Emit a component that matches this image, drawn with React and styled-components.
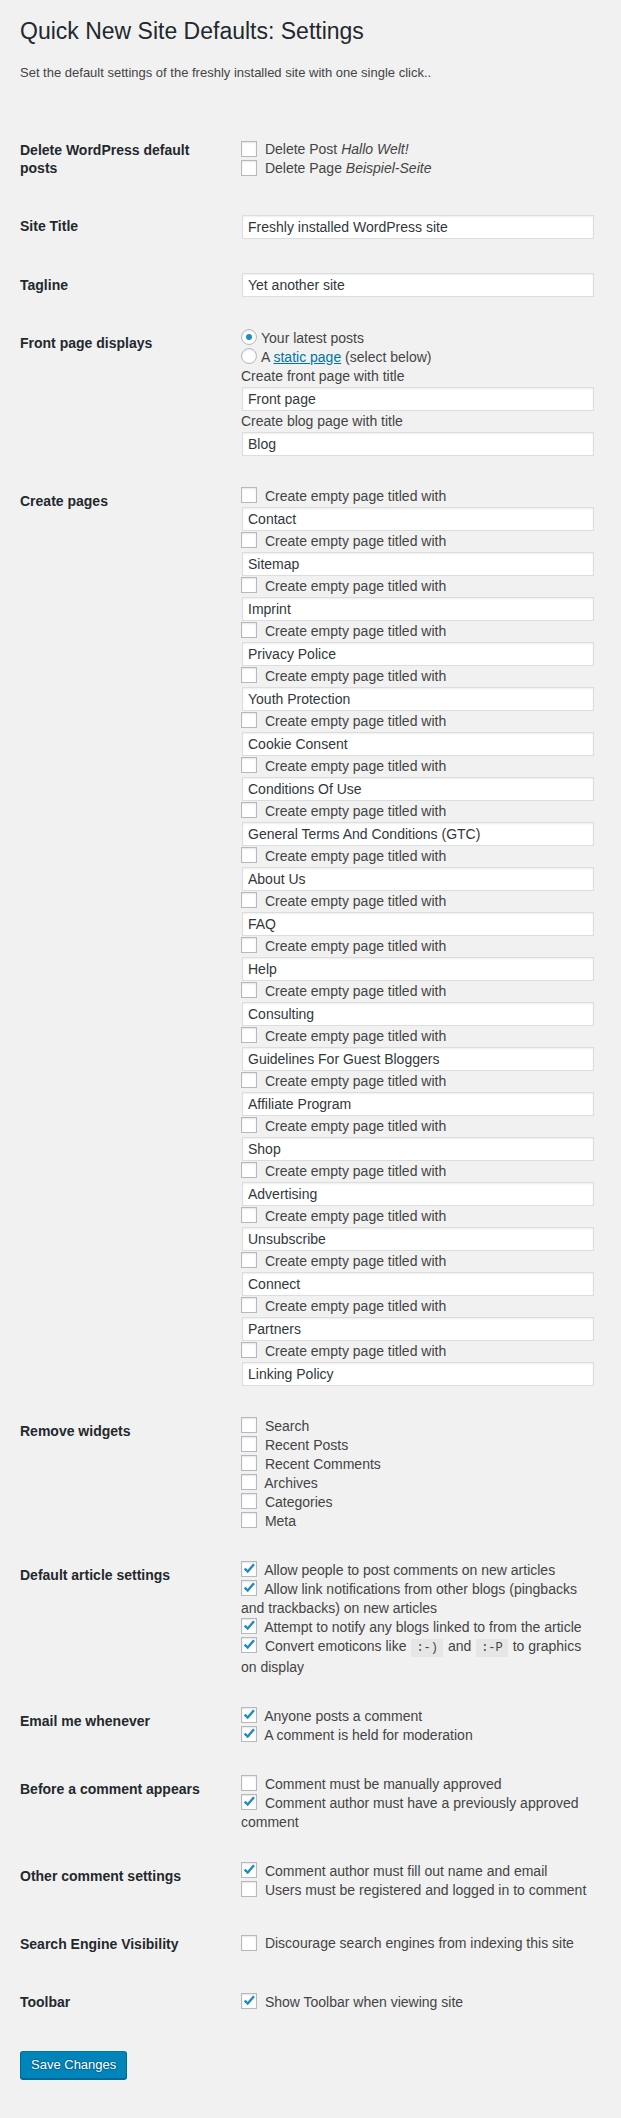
import React from "react";
import styled, { createGlobalStyle } from "styled-components";

const GlobalStyle = createGlobalStyle`
  html, body {
    margin: 0;
    padding: 0;
    background: #f1f1f1;
  }
  body {
    font-family: "Liberation Sans", Arial, sans-serif;
    color: #444;
    font-size: 13px;
  }
`;

const Page = styled.div`
  padding: 17px 20px 39px 20px;
  min-height: 2118px;
  box-sizing: border-box;
`;

const Title = styled.h1`
  margin: 0;
  font-size: 23px;
  font-weight: 400;
  line-height: 29px;
  color: #23282d;
`;

const Intro = styled.p`
  margin: 17px 0 0;
  font-size: 13px;
  line-height: 19px;
  color: #444;
`;

const Form = styled.div`
  margin-top: 39px;
  display: flex;
  flex-direction: column;
`;

const Row = styled.div`
  display: grid;
  grid-template-columns: 221px 355px;
`;

const RowLabel = styled.div`
  align-self: start;
  padding: 20px 21px 20px 0;
  font-size: 14px;
  font-weight: 700;
  line-height: 18.2px;
  color: #23282d;
`;

const RowField = styled.div`
  align-self: center;
  padding: 15px 0;
  font-size: 14px;
  line-height: 19px;
  color: #444;
  display: flex;
  flex-direction: column;
`;

const Option = styled.label`
  display: block;
`;

const Box = styled.span`
  display: inline-block;
  position: relative;
  box-sizing: border-box;
  width: 16px;
  height: 16px;
  margin: -4px 4px 0 0;
  vertical-align: middle;
  border: 1px solid #b4b9be;
  border-radius: ${(p) => (p.$round ? "50%" : "0")};
  background: #fff;
  box-shadow: inset 0 1px 2px rgba(0, 0, 0, 0.1);

  svg {
    position: absolute;
    left: -1px;
    top: -1px;
    display: block;
  }
`;

const Dot = styled.span`
  position: absolute;
  left: 4px;
  top: 4px;
  width: 6px;
  height: 6px;
  border-radius: 50%;
  background: #1e8cbe;
`;

const TextField = styled.input`
  display: block;
  box-sizing: border-box;
  width: 352px;
  height: 24px;
  margin: 1px;
  padding: 0 5px;
  border: 1px solid #ddd;
  background: #fff;
  box-shadow: inset 0 1px 2px rgba(0, 0, 0, 0.07);
  font-family: "Liberation Sans", Arial, sans-serif;
  font-size: 14px;
  color: #32373c;
  outline: none;
`;

const Caption = styled.div`
  display: block;
`;

const Link = styled.a`
  color: #0073aa;
  text-decoration: underline;
`;

const Code = styled.code`
  font-family: "Liberation Mono", "DejaVu Sans Mono", monospace;
  font-size: 12px;
  padding: 2px 5px 2px 5px;
  margin: 0 1px;
  background: #e6e6e6;
`;

const SaveButton = styled.button`
  align-self: flex-start;
  margin-top: 20px;
  height: 28px;
  padding: 0 10px 1px;
  border: 1px solid;
  border-color: #0073aa #006799 #006799;
  border-radius: 3px;
  background: #0085ba;
  box-shadow: 0 1px 0 #006799;
  color: #fff;
  font-family: "Liberation Sans", Arial, sans-serif;
  font-size: 13px;
  line-height: 26px;
  text-shadow: 0 -1px 1px #006799, 1px 0 1px #006799, 0 1px 1px #006799,
    -1px 0 1px #006799;
  cursor: pointer;
`;

function Check({ checked }) {
  return (
    <Box>
      {checked && (
        <svg width="16" height="16" viewBox="0 0 16 16">
          <polyline
            points="3.6,7.6 6.7,10.6 13,3.2"
            fill="none"
            stroke="#1e8cbe"
            strokeWidth="2.4"
          />
        </svg>
      )}
    </Box>
  );
}

function RadioMark({ checked }) {
  return <Box $round>{checked && <Dot />}</Box>;
}

function CheckOption({ checked, children }) {
  return (
    <Option>
      <Check checked={checked} /> {children}
    </Option>
  );
}

const pages = [
  "Contact",
  "Sitemap",
  "Imprint",
  "Privacy Police",
  "Youth Protection",
  "Cookie Consent",
  "Conditions Of Use",
  "General Terms And Conditions (GTC)",
  "About Us",
  "FAQ",
  "Help",
  "Consulting",
  "Guidelines For Guest Bloggers",
  "Affiliate Program",
  "Shop",
  "Advertising",
  "Unsubscribe",
  "Connect",
  "Partners",
  "Linking Policy",
];

const widgets = ["Search", "Recent Posts", "Recent Comments", "Archives", "Categories", "Meta"];

const checkGroups = [
  {
    label: "Default article settings",
    items: [
      { checked: true, text: "Allow people to post comments on new articles" },
      {
        checked: true,
        text: "Allow link notifications from other blogs (pingbacks and trackbacks) on new articles",
      },
      { checked: true, text: "Attempt to notify any blogs linked to from the article" },
      {
        checked: true,
        text: (
          <>
            Convert emoticons like <Code>:-)</Code> and <Code>:-P</Code> to graphics on display
          </>
        ),
      },
    ],
  },
  {
    label: "Email me whenever",
    items: [
      { checked: true, text: "Anyone posts a comment" },
      { checked: true, text: "A comment is held for moderation" },
    ],
  },
  {
    label: "Before a comment appears",
    items: [
      { checked: false, text: "Comment must be manually approved" },
      { checked: true, text: "Comment author must have a previously approved comment" },
    ],
  },
  {
    label: "Other comment settings",
    items: [
      { checked: true, text: "Comment author must fill out name and email" },
      { checked: false, text: "Users must be registered and logged in to comment" },
    ],
  },
  {
    label: "Search Engine Visibility",
    items: [{ checked: false, text: "Discourage search engines from indexing this site" }],
  },
  {
    label: "Toolbar",
    items: [{ checked: true, text: "Show Toolbar when viewing site" }],
  },
];

export default function App() {
  return (
    <>
      <GlobalStyle />
      <Page>
        <Title>Quick New Site Defaults: Settings</Title>
        <Intro>Set the default settings of the freshly installed site with one single click..</Intro>
        <Form>
          <Row>
            <RowLabel>Delete WordPress default posts</RowLabel>
            <RowField>
              <CheckOption>
                Delete Post <em>Hallo Welt!</em>
              </CheckOption>
              <CheckOption>
                Delete Page <em>Beispiel-Seite</em>
              </CheckOption>
            </RowField>
          </Row>

          <Row>
            <RowLabel>Site Title</RowLabel>
            <RowField>
              <TextField readOnly defaultValue="Freshly installed WordPress site" />
            </RowField>
          </Row>

          <Row>
            <RowLabel>Tagline</RowLabel>
            <RowField>
              <TextField readOnly defaultValue="Yet another site" />
            </RowField>
          </Row>

          <Row>
            <RowLabel>Front page displays</RowLabel>
            <RowField>
              <Option>
                <RadioMark checked />
                Your latest posts
              </Option>
              <Option>
                <RadioMark />A <Link href="#">static page</Link> (select below)
              </Option>
              <Caption>Create front page with title</Caption>
              <TextField readOnly defaultValue="Front page" />
              <Caption>Create blog page with title</Caption>
              <TextField readOnly defaultValue="Blog" />
            </RowField>
          </Row>

          <Row>
            <RowLabel>Create pages</RowLabel>
            <RowField>
              {pages.map((p) => (
                <React.Fragment key={p}>
                  <CheckOption>Create empty page titled with</CheckOption>
                  <TextField readOnly defaultValue={p} />
                </React.Fragment>
              ))}
            </RowField>
          </Row>

          <Row>
            <RowLabel>Remove widgets</RowLabel>
            <RowField>
              {widgets.map((w) => (
                <CheckOption key={w}>{w}</CheckOption>
              ))}
            </RowField>
          </Row>

          {checkGroups.map((g) => (
            <Row key={g.label}>
              <RowLabel>{g.label}</RowLabel>
              <RowField>
                {g.items.map((it, i) => (
                  <CheckOption key={i} checked={it.checked}>
                    {it.text}
                  </CheckOption>
                ))}
              </RowField>
            </Row>
          ))}

          <SaveButton type="button">Save Changes</SaveButton>
        </Form>
      </Page>
    </>
  );
}
